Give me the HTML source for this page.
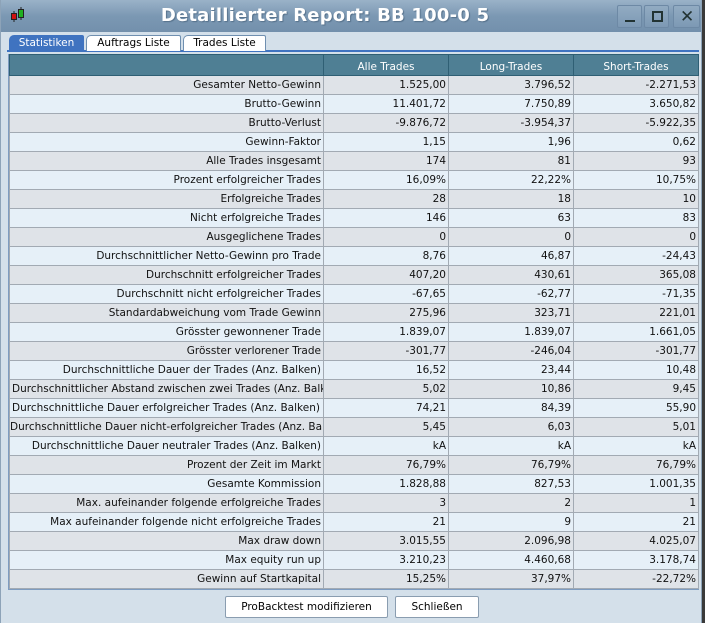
<!DOCTYPE html>
<html><head><meta charset="utf-8"><style>
*{margin:0;padding:0;box-sizing:border-box}
body{width:705px;height:623px;background:#3a3a3a;font-family:"DejaVu Sans","Liberation Sans",sans-serif;overflow:hidden;position:relative}
#win{position:absolute;left:0;top:0;width:702px;height:623px;background:#d4e0ea;border-left:1px solid #8da3b8;border-right:1px solid #8da3b8}
#title{position:absolute;left:0;top:0;width:700px;height:32px;background:linear-gradient(#9ab2c8,#7b98b3 50%,#7390ac);}
#title .t{position:absolute;left:0;width:648px;top:5px;text-align:center;color:#fff;font-weight:bold;font-size:18px;letter-spacing:0.2px;font-family:"DejaVu Sans",sans-serif;text-shadow:1px 1px 1px #55708a}
.wb{position:absolute;top:5px;width:25px;height:23px;border:1px solid #6d89a5;background:linear-gradient(#92abc2,#7d99b4);border-radius:2px}
#tabs{position:absolute;left:8px;top:35px;height:16px}
.tab{position:absolute;top:0;height:16px;font-size:10.5px;line-height:15px;text-align:center;border:1px solid #6f8fb0;border-bottom:none;border-radius:5px 2px 0 0;background:#fff;color:#000}
#tline{position:absolute;left:6px;top:50px;width:692px;height:2px;background:#3f73c0}
#tbl{position:absolute;left:7px;top:54px;width:691px;border:1px solid #7e9cc0;border-top:none}
table{border-collapse:collapse;width:689px;table-layout:fixed;font-size:10.5px}
td,th{height:19px;border:1px solid #a2aab3;white-space:nowrap;overflow:hidden;text-align:right;padding:0 2px 0 2px;color:#111;font-weight:normal}
th{background:#4f7f94;color:#fff;text-align:center;border-color:#2f5f74;height:21px;padding-top:3px}
tr:nth-child(even) td{background:#dfe3e8}
tr:nth-child(odd) td{background:#e6f0f8}
.btn{position:absolute;top:596px;height:22px;background:#fff;border:1px solid #8a9db0;font-size:10.5px;text-align:center;line-height:20px;border-radius:2px}
</style></head><body>
<div id="win">
<div id="title">
<svg style="position:absolute;left:9px;top:7px" width="16" height="16" viewBox="0 0 16 16"><line x1="4" y1="4" x2="4" y2="15" stroke="#222"/><line x1="11" y1="0" x2="11" y2="13" stroke="#222"/><rect x="1.5" y="6.5" width="5" height="6" fill="#d01010" stroke="#222"/><rect x="8.5" y="2.5" width="5" height="8" fill="#20b020" stroke="#222"/></svg>
<div class="t">Detaillierter Report: BB 100-0 5</div>
<div class="wb" style="left:616px"><div style="position:absolute;left:7px;top:14px;width:10px;height:2px;background:#233"></div></div>
<div class="wb" style="left:643px"><div style="position:absolute;left:7px;top:5px;width:11px;height:11px;border:2px solid #233"></div></div>
<div class="wb" style="left:672px;width:27px"><div style="position:absolute;left:6px;top:1px;font-size:17px;color:#233">✕</div></div>
</div>
<div id="tline"></div>
<div id="tabs">
<div class="tab" style="left:0;width:75px;background:#3f73c0;color:#fff;border-color:#3f73c0">Statistiken</div>
<div class="tab" style="left:77px;width:95px">Auftrags Liste</div>
<div class="tab" style="left:174px;width:83px">Trades Liste</div>
</div>
<div id="tbl"><table>
<colgroup><col style="width:314px"><col style="width:125px"><col style="width:125px"><col style="width:125px"></colgroup>
<tr><th></th><th>Alle Trades</th><th>Long-Trades</th><th>Short-Trades</th></tr>
<tr><td>Gesamter Netto-Gewinn</td><td>1.525,00</td><td>3.796,52</td><td>-2.271,53</td></tr>
<tr><td>Brutto-Gewinn</td><td>11.401,72</td><td>7.750,89</td><td>3.650,82</td></tr>
<tr><td>Brutto-Verlust</td><td>-9.876,72</td><td>-3.954,37</td><td>-5.922,35</td></tr>
<tr><td>Gewinn-Faktor</td><td>1,15</td><td>1,96</td><td>0,62</td></tr>
<tr><td>Alle Trades insgesamt</td><td>174</td><td>81</td><td>93</td></tr>
<tr><td>Prozent erfolgreicher Trades</td><td>16,09%</td><td>22,22%</td><td>10,75%</td></tr>
<tr><td>Erfolgreiche Trades</td><td>28</td><td>18</td><td>10</td></tr>
<tr><td>Nicht erfolgreiche Trades</td><td>146</td><td>63</td><td>83</td></tr>
<tr><td>Ausgeglichene Trades</td><td>0</td><td>0</td><td>0</td></tr>
<tr><td>Durchschnittlicher Netto-Gewinn pro Trade</td><td>8,76</td><td>46,87</td><td>-24,43</td></tr>
<tr><td>Durchschnitt erfolgreicher Trades</td><td>407,20</td><td>430,61</td><td>365,08</td></tr>
<tr><td>Durchschnitt nicht erfolgreicher Trades</td><td>-67,65</td><td>-62,77</td><td>-71,35</td></tr>
<tr><td>Standardabweichung vom Trade Gewinn</td><td>275,96</td><td>323,71</td><td>221,01</td></tr>
<tr><td>Grösster gewonnener Trade</td><td>1.839,07</td><td>1.839,07</td><td>1.661,05</td></tr>
<tr><td>Grösster verlorener Trade</td><td>-301,77</td><td>-246,04</td><td>-301,77</td></tr>
<tr><td>Durchschnittliche Dauer der Trades (Anz. Balken)</td><td>16,52</td><td>23,44</td><td>10,48</td></tr>
<tr><td style="text-align:left">Durchschnittlicher Abstand zwischen zwei Trades (Anz. Balken)</td><td>5,02</td><td>10,86</td><td>9,45</td></tr>
<tr><td style="text-align:left">Durchschnittliche Dauer erfolgreicher Trades (Anz. Balken)</td><td>74,21</td><td>84,39</td><td>55,90</td></tr>
<tr><td style="text-align:left;padding-left:0">Durchschnittliche Dauer nicht-erfolgreicher Trades (Anz. Balken)</td><td>5,45</td><td>6,03</td><td>5,01</td></tr>
<tr><td>Durchschnittliche Dauer neutraler Trades (Anz. Balken)</td><td>kA</td><td>kA</td><td>kA</td></tr>
<tr><td>Prozent der Zeit im Markt</td><td>76,79%</td><td>76,79%</td><td>76,79%</td></tr>
<tr><td>Gesamte Kommission</td><td>1.828,88</td><td>827,53</td><td>1.001,35</td></tr>
<tr><td>Max. aufeinander folgende erfolgreiche Trades</td><td>3</td><td>2</td><td>1</td></tr>
<tr><td>Max aufeinander folgende nicht erfolgreiche Trades</td><td>21</td><td>9</td><td>21</td></tr>
<tr><td>Max draw down</td><td>3.015,55</td><td>2.096,98</td><td>4.025,07</td></tr>
<tr><td>Max equity run up</td><td>3.210,23</td><td>4.460,68</td><td>3.178,74</td></tr>
<tr><td>Gewinn auf Startkapital</td><td>15,25%</td><td>37,97%</td><td>-22,72%</td></tr>
</table></div>
<div class="btn" style="left:224px;width:163px">ProBacktest modifizieren</div>
<div class="btn" style="left:394px;width:84px">Schließen</div>
</div>
</body></html>
